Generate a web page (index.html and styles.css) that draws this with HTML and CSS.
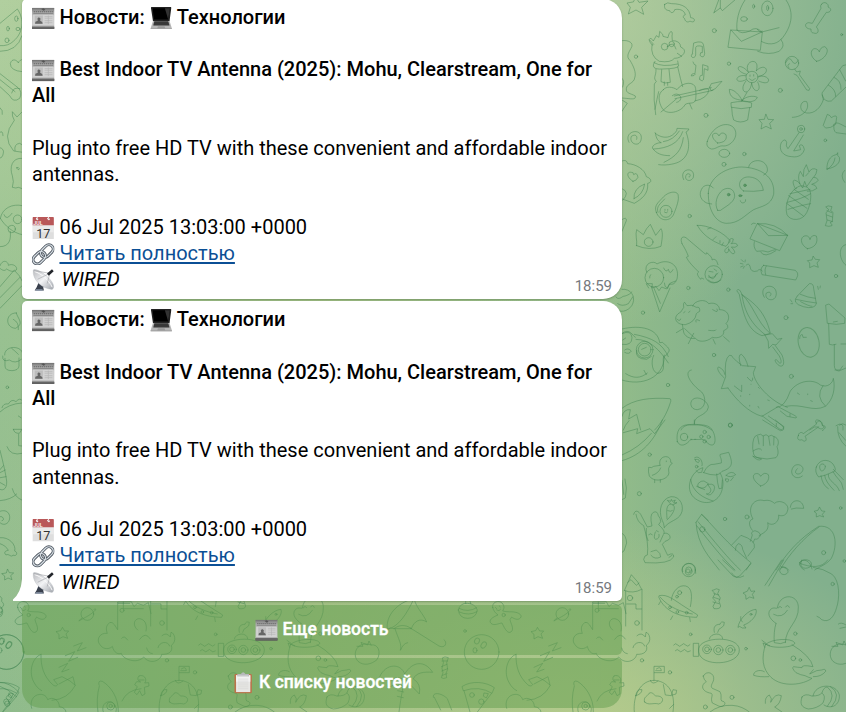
FILE: index.html
```html
<!DOCTYPE html>
<html lang="ru">
<head>
<meta charset="utf-8">
<title>Новости</title>
<link rel="stylesheet" href="styles.css">
</head>
<body>
<svg class="defs" width="0" height="0" aria-hidden="true">
  <defs>
    <linearGradient id="paper" x1="0" y1="0" x2="0" y2="1"><stop offset="0" stop-color="#777"/><stop offset=".2" stop-color="#aaa"/><stop offset=".85" stop-color="#c8c8c8"/><stop offset=".9" stop-color="#555"/></linearGradient>
    <linearGradient id="dish" x1="0" y1="0" x2="1" y2="1"><stop offset="0" stop-color="#b8b9bd"/><stop offset=".5" stop-color="#f2f3f5"/><stop offset="1" stop-color="#9fa3aa"/></linearGradient>
    <symbol id="news" viewBox="0 0 66 66">
      <path fill="url(#paper)" d="M0 3H66V65H0Z"/>
      <path fill="#d2d2d2" d="M2 23H64V56H2Z"/>
      <path stroke="#777" stroke-width="2" d="M1 4H65M4 19H62"/>
      <path stroke="#666" stroke-width="3" stroke-dasharray="4 2" d="M5 14H62"/>
      <path fill="#555" d="M27 6l7-2 5 4-5 3z"/>
      <path fill="#bdbdbd" d="M8 25H32V50H8Z"/>
      <path fill="#666" d="M9 49l1-6 7-3-1-6 4-4 5 4-1 6 6 4 1 5z"/>
      <path stroke="#b5b5b5" stroke-width="2" d="M37 28H60M37 33H60M37 40H60M37 46H60M48 25V50"/>
      <path stroke="#666" stroke-width="5" d="M0 61H66"/><path stroke="#999" stroke-width="2" d="M1 56H65"/>
    </symbol>
    <symbol id="laptop" viewBox="0 0 66 68">
      <path fill="#222" d="M3 0H62Q64 0 63 5L58 43H8L2 4Q2 0 3 0Z"/>
      <path fill="#000" d="M7 4H59L54 38H11Z"/>
      <path fill="#333" d="M44 4H59L54 38Z"/>
      <path fill="#b5b5b5" d="M8 42H58L65 64V68H1V64Z"/>
      <path fill="#333" d="M12 43H54L58 56H9Z"/>
      <path stroke="#555" d="M11 48H56M10 52H57"/>
      <path fill="#999" d="M23 58H43L45 64H21ZM1 65H65V68H1Z"/>
    </symbol>
    <symbol id="calendar" viewBox="0 0 66 68">
      <path fill="#dedede" d="M1 22H65V68H1Z"/><path fill="#eaeaea" d="M1 22H65V46H1Z"/>
      <path fill="#b95859" d="M3 0H63Q65 0 65 3V25H1V3Q1 0 3 0Z"/>
      <path stroke="#fff" stroke-width="3" fill="none" d="M16 1q-6 2-3 6M50 1q-6 2-3 6"/>
      <circle cx="15" cy="7" r="3" fill="#eee"/><circle cx="50" cy="7" r="3" fill="#eee"/>
      <text x="3" y="24" class="cal-month">JUL</text>
      <text x="33" y="62" class="cal-day">17</text>
    </symbol>
    <symbol id="link" viewBox="0 0 66 68">
      <g fill="none" transform="rotate(-45 33 34)">
        <g stroke="#4b545e" stroke-width="9"><rect x="-4" y="20" width="42" height="26" rx="13"/><rect x="26" y="22" width="43" height="26" rx="13"/></g>
        <g stroke="#d5dce2" stroke-width="4"><rect x="-4" y="20" width="42" height="26" rx="13"/><rect x="26" y="22" width="43" height="26" rx="13"/></g>
      </g>
    </symbol>
    <symbol id="antenna" viewBox="0 0 66 68">
      <path fill="#39404d" d="M19 41L37 48L33 56L35 65H7L13 55Z"/><path fill="#8c98ab" d="M10 61H31V66H10Z"/>
      <path fill="url(#dish)" stroke="#aaaeb4" d="M3 3C-1 30 26 59 60 62C68 56 65 42 48 26C32 10 10 -2 3 3Z"/>
      <path fill="none" stroke="#fafafa" stroke-width="3" d="M7 8C25 12 51 34 60 55"/>
      <path stroke="#a5a7ab" stroke-width="2" fill="none" d="M16 31L53 13L45 44M5 5L53 13"/>
      <path stroke="#23262b" stroke-width="8" d="M47 17L62 4"/>
    </symbol>
    <symbol id="clipboard" viewBox="0 0 66 68">
      <rect x="5" y="6" width="54" height="60" rx="4" fill="#b9744b"/>
      <path fill="#e8e8e6" d="M10 10H54V62H10Z"/><path fill="#f3f3f2" d="M10 10H54V30H10Z"/>
      <path stroke="#cbcbca" stroke-width="1.5" d="M16 22H48M16 28H48M16 34H48M16 40H48M16 46H48M16 52H48"/>
      <path fill="#b7b9ba" d="M14 6H25Q32-4 39 6H50V14H14Z"/><path fill="#ddd" d="M16 11H48V15H16Z"/>
    </symbol>

    <g id="bowl"><circle cx="155" cy="276" r="52"/><ellipse cx="141" cy="243" rx="7" ry="9" transform="rotate(30 141 243)"/><ellipse cx="161" cy="255" rx="7" ry="10" transform="rotate(35 161 255)"/><ellipse cx="135" cy="271" rx="6" ry="8"/></g>

    <g id="lower">
      <path d="M85 150q5-22 28-20t29 20q-4 25-29 25t-28-25zM87 145q27 14 53-2M88 156q28 13 53-1M107 130v-12l11-3 4 16"/>
      <path d="M188 142c-4-18 26-26 33-5 3 6-1 12-3 16 12 4 30 1 40 4s20 9 13 17-20 2-26-3l-5 8c2 12 14 27 3 37-10 5-17-6-27-27-8 0-24 10-33 1s5-19 21-25c-8-6-14-13-16-23zM196 142l4 4M208 138l3 3M200 150q8 6 12-2"/><circle cx="221" cy="165" r="5"/>
      <circle cx="397" cy="162" r="19"/><path d="M381 174c-22 18-3 5 14-4 20-11 37-28 22-22"/><circle cx="105" cy="213" r="4"/>
      <path d="M323 203l6 10 12 0-8 9 5 13-14-5-12 7 0-14-9-8 13-3z"/>
      <use href="#bowl"/>
      <path d="M356 258l26-10-15 25 26-10M331 287l28-12-18 29 27-12M312 322l26-12-18 26 22-8"/>
      <path d="M258 283c-27 9-39 55-20 86 6 11 13 18 22 23M258 283c-1 36 8 66 35 91 5 5 12 5 15 0l-12-15 25-9q27 12 40 26-22 42-70 45M312 372l42-22 6 25"/>
      <path d="M230 445c-6-18 2-40 25-42 14 0 20 7 23 16 14-10 35 0 35 21q18 2 20 16"/>
      <path d="M36 303h17M34 320l17-7M35 333l18-7M37 346l14-5M38 293q6-5 17 0l-5 15 3 20-5 12 2 13q-10 5-16 0l5-15-3-13 4-16z"/>
      <path d="M97 379c27-18 71-14 96 4l-7 17q-38-24-85-8zM102 392l18 64M184 401l-42 55"/><circle cx="126" cy="405" r="7"/><circle cx="154" cy="425" r="8"/><path d="M163 399l12 2-6 13-8-5zM10 412c-4-18 26-13 42 4l13 34M13 412l19 38"/>
      <path d="M432 375q-4-15 10-11c24 14 49 48 48 91M433 378c-7 24-8 55-4 78M445 456c-10-28 22-42 35-20q7 10 3 20M501 423q14-33 57-37"/><circle cx="467" cy="438" r="12"/><circle cx="467" cy="438" r="5"/>
      <path d="M552 348c13-7 27 9 17 21l12-1 1 10-14 4 2 20-9 5-7-15-8 12-8-7 9-17-8-6 6-9 12 1q-15-7-5-18M552 360h15"/>
      <path d="M488 208v-82l41-1 8 15 10-10 18 6 15-8 8 33M490 130h34M505 126v20h60M583 92l21-48q23 22 31 44-27 14-50 4zM587 93v105M636 88v122M590 132h28v15h17M593 67l10-8 16 17 8-7M548 210c-20-17-7-39 10-33 16 5 18 24 15 36M487 208q-17-34-29-14c-8 10-1 26-1 26-25-3-34 22-22 34 11 18 32 12 37 5 5 20 18 25 27 21 3 17 47 34 67 11 19 24 51 12 54-8 21 1 35-8 29-27 18-12 9-38-1-39l-2 14q-12-16-25-4M500 235q7-11 18 5M554 238q17-25 32-1M575 264q3 15 17 17M609 263c3-18 30-22 35-5"/><circle cx="501" cy="151" r="6"/><circle cx="600" cy="114" r="8"/><circle cx="621" cy="189" r="7"/>
      <path d="M688 107c23-7 47 15 77 34l38 24-3 7c-49-1-95-16-113-59zM724 121c2-27 23-48 43-43 20 5 20 32 14 62M691 112c26 31 63 44 96 50M691 125l-5 9M728 168l-6 11M779 173l2 12"/><circle cx="749" cy="98" r="6"/><circle cx="741" cy="110" r="4"/><circle cx="720" cy="142" r="4"/><circle cx="742" cy="156" r="4"/><circle cx="770" cy="158" r="4"/>
      <path d="M850 90q10-7 18-1l-5 12 8 13-4 10 5 14q-1 10-20 8l-3-7 8-15-9-10 7-13-8-9zM852 101l14 4M851 112l18 6M849 126l18 5M958 83l5 11 12-1-8 10 5 12-13-4-11 7-1-13-8-6 12-5z"/>
      <path d="M924 201c3-24 32-52 54-53 6 18-17 41-37 47l7 9-11 0-7-4zM937 186q-8-6-5-16"/><circle cx="963" cy="163" r="3"/><circle cx="782" cy="223" r="4"/>
      <path d="M806 265c5-36 120-39 122 4 2 48-116 54-122 8zM791 250h15v39h-15zM838 237c3-19 39-21 40-1M853 217c-4-18 4-24 17-24q2-10 13-6 1 12-10 17-7 0-10 13M731 255q6-8 12 0t12 0 12 0 13-1M736 272q6-7 11 0t11 0 10 0 13 1"/><circle cx="831" cy="268" r="13"/><circle cx="831" cy="268" r="7"/><circle cx="865" cy="270" r="14"/><circle cx="865" cy="270" r="7"/><circle cx="901" cy="270" r="14"/><circle cx="901" cy="270" r="7"/><circle cx="948" cy="266" r="4"/>
      <path d="M1038 190c-12-7-31-27-16-42 9-8 17-1 20-4 6-44 61-45 63-3 2 47-38 60-39 107M1031 163q25 14 41-12M1045 144q4-9 10-1M1067 141q6-10 11 1M1038 190c-5 16-7 39-5 58q20 7 34-2M1007 253c18-17 77-20 87-5 5 14-67 20-84 6M1007 253c-14 39-10 74 16 99 35 32 97 22 123 3l-10-3q-10-6-24-8l-14-6q-15-15-7-18 12 2 25 3-2-10 33-3-7-32-63-66M1003 335c-15-9-34 0-32 11 12 4 27 5 45 4M1150 329l-11 13 21-10 15-2q13-5 12 4-13 17-37 16M996 241l12 9M1004 262l-5-13 20 8"/><circle cx="1090" cy="295" r="7"/><circle cx="1111" cy="300" r="4"/><circle cx="1096" cy="221" r="5"/>
      <path d="M1248 255c-39-15-60 26-39 49 18 15 40 9 57-5 14-23 3-48-18-44l-6-12-4 12-20-8 6 12-18 0"/>
      <path d="M613 456c-5-48 18-95 60-95 33 2 66 26 56 95M672 362v-43h31v19h-30M679 327q14-10 15 5h-17M644 426c-6-16 10-17 13-26 10-7 17 8 21 8 26-1 24 20 8 24-16-5-30 6-42-6zM700 374l6 31 18 2 5-18 11 2-2 11-11 3M661 361q5 16 23 2M617 407q4-22 19-18-1 14-19 18zM719 445l12-12"/>
      <path d="M820 348c10-19 34-9 31 11-2 11-12 18-4 26l23 10c7 12 0 23 5 28 20 3 5 22-9 15l-19-9c-7-16 4-22-3-29-30-5-33-25-15-35-5-4-8-9-9-17zM840 456q28-22 66-20c23 1 39 10 52 20"/><circle cx="906" cy="412" r="6"/><circle cx="720" cy="337" r="5"/><circle cx="826" cy="441" r="6"/><circle cx="636" cy="301" r="5"/>
      <path d="M1006 430q-2-19 12-25 10 12 4 22 14-29 32-20-3 26-20 34l22 15M1116 411q9-12 29-3 25 0 30-9 14 7 4 30-18 17-44 18c-21-5-26-15-19-36zM1149 408c6-38 70-40 79-3 2 31-24 44-46 30M1176 398q5-17 16-17 29 24 0 58M1201 380q36 20 4 60"/>
      <path d="M1297 208c-6-40 28-80 80-92 8 30 28 45 38 70-19-13-38-3-46 20-18-14-38-11-52 0q-12-6-20 2zM1297 208c34-7 58-46 80-92M1317 206l52 0M1366 204l86 54c20 9 26-12 15-19M1320 206c10 32 22 47 16 64M1337 270q7-20 21-22"/>
      <path d="M1274 350c19-42 64-40 75-8 24-39 60-42 84-5-25-2-50 0-58 20q24 14 18 45-24-25-44-45c-8 40-13 67-17 99M1345 357c-26-11-47 4-48 28 18-12 35-11 48-28M1331 375l18 4M1328 392l18 4M1327 409l18 4"/>
    </g>
  </defs>
</svg>

<svg class="wallpaper" viewBox="0 0 846 712" aria-hidden="true">
  <g class="ink">
    <g transform="translate(-45 560) scale(.333333)"><use href="#lower"/></g>
    <g transform="translate(430 560) scale(.333333)"><use href="#lower"/></g>
    <g transform="scale(.333333)">
      <path d="M0 70L52 27c22 31 17 72-11 96Q25 139 0 137M0 154q52 0 66-47"/><ellipse cx="49" cy="56" rx="5" ry="8"/><ellipse cx="24" cy="86" rx="4" ry="7"/><ellipse cx="54" cy="87" rx="6" ry="5"/><ellipse cx="21" cy="121" rx="6" ry="7"/>
      <path d="M66 215Q31 212 31 191c4-18 21-11 24-2q4-11 13-10M0 221l54 42q14 13 5 32-19 15-30-8L0 260M0 239l45 36M35 279q5-20 25-13M0 323q10 8 7 20M0 397q8-8 9 10M0 443q13 4 10 16-2 15-10 15M66 336l-15 15-14-16q-2 13 6 26-40 50-2 92l28 4M45 452q-4-20 14-22l7 4M67 475c-32-3-39 28-30 52q6 18 0 35 12 4 18 0l12 4M50 503q5-4 8 3-3 8-8-3M1 655c5-31 37-45 66-38M1 655c13 22 38 44 66 49M0 740c29 0 33-22 31-45"/><circle cx="53" cy="658" r="13"/><circle cx="35" cy="687" r="11"/><path d="M12 644q7 20 24-4M0 797c9-23 26-11 25-1 13-7 29 4 24 14-10 9-23 1-29-3-7 8-14 3-20-2M45 813q16 14 22 31M0 860l43-50M0 893l60-61M0 925l66-68M49 939c-32-2-36 43-3 46 28-14 7-29 3-46zM40 958q18 9 15 31M14 1065c-1-31 54-29 54-3M35 1045q8 6 20 18"/>
    </g>
    <g transform="translate(0 356) scale(.333333)">
      <path d="M15 7v23q0 14 21 14 20-1 21-14V6M8 0q-2 20 20 12 18 13 36-2"/><circle cx="22" cy="94" r="4"/>
      <path d="M0 168q26-25 66-27M6 155q4-14 19-11 10-17 23-7 12-14 19-3M40 220h26l-8 12q-15 1-18-12M56 235v34l10 1M21 272q10 29 46 20M55 180l8 5M0 283q14 54 19 85c5 28-8 38-19 32M0 341l10-12M0 350l16-8M1 365l17-3M1 380l14 8M0 434q34-3 50-20M37 398q6 25 30 35M0 466c35-13 38 37 12 39-23-1-18-30-5-22q8 9-1 11M0 545c28-3 49 22 44 40 11 4 6 18-5 12-4 10-13-6-21 0-9-9 0-13 7-14Q18 569 0 563M23 640l5 10 13 1-9 8 4 12-12-5-10 6 0-12-9-7 13-2z"/>
      <path d="M0 720q9 6 5 16Q17 747 5 755q8 17-3 27"/><circle cx="19" cy="888" r="52"/><ellipse cx="4" cy="856" rx="7" ry="10"/><ellipse cx="27" cy="867" rx="7" ry="11" transform="rotate(35 27 867)"/>
      <path d="M0 979q28 0 57 30l-8 13Q23 998 0 991M50 1021L9 1068M28 1015q15 8-2 18-16-8 2-18"/><circle cx="22" cy="1043" r="8"/>
    </g>
    <g transform="translate(616 0) scale(.333333)">
      <path d="M60-8l9 15 27-4-19 19 6 21-23-13-23 12 6-20-10-13 18-3z"/>
      <path d="M146 13q8-8 21-2c36 0 54 14 57 42 8 1 15 5 9 12-6 2-9-2-12-1-8 5-14-1-15-8-8-4-3-11 2-12-4-15-20-18-32-15-2 10-12 12-15 3-15-1-17-10-15-19zM294 38l14-38M294 38l19-14 6 8L359-2M313 24V0"/>
      <path d="M363 90c-3-24 4-61 24-90M363 90q12 15 38 3 20-16 36 3l52-13M510 0c28 40 15 84-15 119q15 20-6 35-30 13-64 0M436 124c17 10 43 13 60-7M424 88q8 12 14 5"/><ellipse cx="454" cy="25" rx="17" ry="22"/><ellipse cx="455" cy="24" rx="3" ry="8"/><ellipse cx="413" cy="19" rx="3" ry="6"/><ellipse cx="384" cy="57" rx="10" ry="7"/>
      <path d="M345 90l94 6-6 55-96-9zM345 90l31 34 62-28"/>
      <path d="M617 12c9-11 23 1 19 9 14 5 8 18-5 16l-30 44c11 12 4 23-8 18-9 0-8-9-8-12-17 1-23-17-7-19l11 2 26-45q-4-8 2-13zM602 184c-27-17-16-44 0-37q7 3 8 9 3-15 16-16c20 10-2 41-24 44z"/><circle cx="295" cy="92" r="6"/><circle cx="60" cy="170" r="5"/><circle cx="339" cy="191" r="5"/><circle cx="493" cy="271" r="6"/><circle cx="270" cy="346" r="6"/><circle cx="677" cy="104" r="3"/><circle cx="628" cy="421" r="4"/>
      <path d="M109 135c-18-16-6-28 3-12l9-16 8 5 2-18q13 10 10 15l15 4c4-23 16-24 12-5l1 14q24 0 25 19 16 7 10 19-10 15-29 15-10 14-45 9-28-15-22-50zM101 120l12 13M153 140q20-19 27 7M184 160l13 9M117 184c-11 16-5 25 23 23q45-1 48-9l-3-15M114 188q25 15 71 4M120 208c1 20-10 25 1 36l-6 8q-3 50 4 92M185 200q9 40 15 60M137 209l-2 36q10 7 28 2l-4-39M145 246v10M155 248v8"/><circle cx="146" cy="140" r="10"/><circle cx="167" cy="132" r="8"/>
      <path d="M142 269c8-11 28-9 41 0 16-24 54-26 56-3q2 20 0 34c-7 15-20 5-32 14-10 22-57 34-69 10-10-17-15-43 4-55zM128 275q-5 20-11 53M169 287q12-10 23 0c7 10-2 19-10 20M135 336l46-39M175 288l111-25M177 296l114-25M281 262l5-11 32-7-20 22-13 6-4-11M250 272q20-10 29-3-4 26-42 34M221 311q4 10 7 16"/>
      <path d="M229 162l4-33q30-10 30 9l3 22q-2 18-14 6 1-12 7-8v-19q-19-4-20 4v22c-2 14-21 6-10-3M231 186q3 10 9 10l-3 25q-12-1-11 7 10 0 12-5M251 238q-2-13 8-12l1-32 16 5v12l-11-5-2 28q-1 15-12 4"/>
      <ellipse cx="408" cy="231" rx="18" ry="17"/><path d="M400 236q8 12 18-1M402 225v4M413 224v4"/>
      <path d="M397 216c-18-34 38-49 24-4M421 212c28-28 48 8 8 17M429 229c38-7 40 34-1 14M425 246c16 30-14 38-18 3M407 249c-6 46-44 26-17-6M390 239c-35 18-38-17-1-12M391 223c-42-12-24-42 6-7"/>
      <path d="M393 277l-15 26M378 301c-8-17-23-32-38-33 0 26 18 30 38 33zM378 301c13-13 34-15 46-9-6 16-30 15-46 9zM346 308q40-8 61 1l-1 13q-31 8-59 0zM347 322q1 27 6 38 20 12 42 0l6-37"/>
      <circle cx="528" cy="189" r="20"/><path d="M509 188q10-22 19-5t19-3M519 204q-8-10 2-13M536 207l6 9 11-3-3 11 31 42q1 8-9 4l-29-44-9-4M622 299l-4-20 62-82 12-3M618 285q7 23 28 18l44-42M637 255q23 13 22 34M654 232q22 9 21 36M671 209l18 34M622 299c-7 23-26 43-50 40-28-4-19-41 0-34 12 24-15 47-43 47M450 343l6 15 17 1-12 11 5 17-16-8-15 8 3-17-9-11 15-1zM622 375l12-32q10 3 12 10 15-10 16-1l-3 21-15 9-14 2zM654 373q4-9 21 0l15 8M654 373q-3 18 6 25l30 4"/>
      <path d="M39 427c-18-34 37-45 37-14-1 32-39 20-30-4 14-9 19 1 16 9M117 399c12 12 44 24 65-7l1-7 36 2q-4 8-9 9c13 34 12 70-18 88-9 6-38 14-64 10M118 399c2 16 9 26 18 29-10 0-26 5-27 16 12 17 28 23 52 23M142 425q30-4 48-32M113 447c41-2 75-16 87-52M144 487c36-18 53-35 58-74"/>
      <path d="M274 424c12-40 51-62 76-44 23 22 0 57-26 58-16-3-23 10-38 9-12-4-16-12-12-23zM305 429c-20-14-20-31-4-29q5 1 8 8 7-16 21-4c4 15-5 24-25 25z"/><ellipse cx="325" cy="460" rx="16" ry="12"/><circle cx="324" cy="493" r="6"/><circle cx="385" cy="462" r="5"/>
      <circle cx="555" cy="387" r="11"/><circle cx="555" cy="387" r="4"/><path d="M549 398l-33 48q-8-7-4-19-4-14-16 0c-10 24 6 42 31 43 23 4 35-9 38-22q-5-20-15-11l4 12-21 4 29-48M18 122c18-3 38 6 27 23-8 14-15 26-3 36 10 17 20 37 14 53-2 16-24 17-25 32s11 13 27 22c2 13-12 8-40 6M18 235q9 5 2 26M18 300l16 10-10 14-6 10"/>
    </g>
    <g transform="translate(616 140) scale(.333333)">
      <path d="M18 63q14-6 17 8c24 1 52 17 56 39 15 5 19 17 4 20 3 32-18 47-40 60l-36-13M51 124c-20-12-20-30-5-27q7-1 7 7 10-9 13 8-5 11-15 12zM54 176q-3-30 32-44-5 32-32 44M18 146q26 10 2 35M203 119c-17-35 37-41 29-7-9 19-33 6-19-10 13-4 11 11 6 9"/>
      <path d="M121 217c-9-21 7-30 22-47 14-15 45-21 44 0 2 15-11 45-15 55-10 19-40 22-51-8zM126 217c-7-18 8-26 20-40"/><circle cx="150" cy="214" r="18"/><path d="M145 216q6 6 10 0M147 208v3M155 208v3"/>
      <path d="M287 192c-25 0-42-22-31-43 7-17 27-17 36-5M398 82c2-25 49-30 56 3 2 11-5 17-11 20M277 160c0-46 52-79 100-79 56 2 101 28 96 82-8 34-36 35-60 46-25 15-44 42-82 41-33-2-55-42-54-90zM305 211c-11-19-3-47 15-61 18-11 36-3 36 19-2 20-32 33-42 42q-6 1-9 0zM383 153c-23-12-13-45 18-42 23 2 37 16 41 40q-28 5-59 2zM373 182q2 9 11 6 7-3 5-9"/><g class="solid"><circle cx="338" cy="164" r="4"/><circle cx="387" cy="136" r="4"/><ellipse cx="373" cy="167" rx="5" ry="3"/></g>
      <path d="M541 144c-19 10-37 50-28 80 10 21 47 19 59-6 12-24 22-73-4-78q-16-7-27 4zM534 148l43 30M518 167l55 38M512 190l50 38M516 208q47-14 68-17M514 187q45-11 70-26M522 161l60-13M538 146q-12-22-3-26 12 3 17 12-9-22 1-38l9 16q-1-24 9-36l8 22q9-15 24-7-1 13-10 23 10-1 14 9-6 8-20 12 12 0 16 12-12 10-29 9M552 132l8 12 6-20 6 16 20-28M569 108l9-10"/>
      <path d="M633 87c-2-22 11-39 24-42q7 0 8-7-2 10 5 14c4 16-9 30-37 35zM657 54q-2 20-23 34M686 91q-16 15 0 36M630 200q5-5 18 0l-4 12 7 5-2 27-7 4q8 5 6 9-9 4-20 0l5-15-3-24 8-8zM633 212l14 6M632 225l17 6M634 240l16 5M18 239q14-10 13 3L18 274"/>
      <path d="M62 317c2-18-5-31 0-48l20 15q9-20 21-31l16 33 16-20c8 13 2 37 0 53q-35 14-73-2z"/><circle cx="98" cy="306" r="13"/>
      <path d="M244 256c31-2 81 22 99 47l-13 16c-28-9-67-27-86-63zM275 267l10-4M291 299l9-9M312 302v6M318 316l4-8M338 308q2-17 14-11-1 11-7 14 18-4 20 6-7 8-19 4 15 15 8 20-9 2-16-15 0 15-9 12-9-8 9-18"/>
      <path d="M425 251l90 35-24 46-88-35zM425 251l32 36 58-1M425 251q53-5 90 35M415 305q-4 17 7 29 20-4 34 2 15-6 22-7M434 336q10 20 46-4M406 253q5-6 12-3"/>
      <path d="M198 311c-6-15-1-24 12-18l53 45q10 9 9 0 18 14 16 22 12-9 18 14M198 311c8 13 15 26 19 38l-6 3c7 14 20 27 37 44-8 5-1 14 6 22q0-7 9-1"/><circle cx="293" cy="403" r="26"/><path d="M279 394l12 2M294 387l8 6M278 406q14 24 23-5M277 411q17 7 29-12"/>
      <path d="M574 326c-29-17-18-43 0-38q8 4 8 11 5-17 19-11c7 21-6 36-27 38zM592 349l6 9 13 1-8 10 4 13-13-5-13 6 0-14-7-7 13-2zM443 376l95 15q10 8 7 16t-6 13l-101-16q-8-20 5-28zM451 378q-7 10-2 26M439 393q-8-9-15 0-20 6-22-14-4-12-12-3M373 370l8 2M376 359l6 6M388 360l-1 6M374 381l7-3M382 385l3-6"/>
      <circle cx="221" cy="228" r="5"/><circle cx="660" cy="408" r="5"/><circle cx="115" cy="413" r="28"/><path d="M92 397c-12-28 22-37 31-25 31-18 70 0 60 45-8 21-17 14-24 16l-4 12q-10-3-10-16M143 384q7 16 14 4 4 19 14 1M91 432l7 12M104 404q-4 4-3 10M690 314c-22 2-24 43 0 62"/>
    </g>
    <g transform="translate(616 280) scale(.333333)">
      <path d="M93 11l16 0-1 13 12-4 9 12 8-11 15 6 11-18 16-6M106 20l25 76 31-72M114 25l19 45M0 51c4 8 14 4 21-2 7 0 24-7 26-13M5 71q13 10 32 0l13-20M18 28c26-3 40 20 33 41-6 20-34 33-48 20M276 0q20 16 39 0"/>
      <path d="M203 81q-2-14 3-14l7 10q16-5 28 5 12-3 10 12-8 4-10 7-3 25-33 33c-30 1-40-25-15-37zM183 117q8 10 11 0M203 98l4-3M218 97l4-3M230 78c5-17 39-23 48-7 20-6 34 7 32 18 32 0 33 30 20 41q14 14-7 22c3 19-20 24-34 20-18 16-45 14-50 3-22 3-33-9-36-18l-4-24M181 158l20-12M217 191l16-31M291 177l7 15M323 170l17 15M206 146l29 27M240 126q-4-12 11-4M290 89q20 13 13-2M278 151q21 3 22-1"/>
      <path d="M363 31c6-8 11 3 15 13 35 24 70 50 85 116l-25 7c-45-16-56-65-68-123zM378 44c5 39 20 82 68 119M378 44c34 30 44 81 82 114M447 165l22-4 15 17 14-3-18 20-10-2-12 12q3-23-11-40M478 197l20 28c14 38-5 40-17 24-9-12 1-14 7-2 9 8 10-4 2-19l-20-27M445 52c-22-37 36-47 36-11-1 29-39 20-30-2 15-8 17 7 11 9M544 48l36-37q13-2 13 15l8 45q-5 18-39 9-38-11-18-32M540 58q30 7 61 11M553 43q23 10 45 12M554 65q25 14 34 14M605 19l2 9M613 18l-1 6M523 59l5 7M525 71h5"/>
      <circle cx="217" cy="24" r="5"/><circle cx="337" cy="29" r="5"/><circle cx="81" cy="98" r="5"/><circle cx="510" cy="113" r="6"/><circle cx="294" cy="225" r="5"/><circle cx="526" cy="289" r="6"/><circle cx="156" cy="315" r="5"/><circle cx="343" cy="436" r="6"/>
      <ellipse cx="578" cy="187" rx="31" ry="45" transform="rotate(-12 578 187)"/><path d="M551 176q0-13 8-12l2 8 10 0M630 75l9-3 48 42-1 16-25 3-26-3zM638 131l2 62q9 4 20 0M652 126l12-2M655 194v62q0 16 14 17l21-9M675 192h15M657 270l15 0 8-12"/>
      <path d="M18 147c58-14 108 0 113 41l8-1c7 7 28 20 18 30q-3 9-12 12c-2 66-68 90-127 71M18 160c24-18 32 9 40 12M55 163c55 11 83 26 102 67M60 178c42 0 72 33 97 71M113 226c-10 20-4 55 15 54 27-7 6-40 17-55M26 210q9-8 20 3-7 12-20 4M29 281c24 15 44 15 65-2M84 271l7 13"/><circle cx="86" cy="209" r="25"/><circle cx="86" cy="209" r="19"/><path d="M62 211q-7 26 30 27l14-9M18 161q28-12 30 12 0 25-30 20M77 208l14-6M20 180l9-6"/>
      <path d="M336 324l-20 2 13-36q-5-52 11-64 8-2 11 7 8 10 28 24l40 3-7 18c2 31 50 86 102 104M336 324c24 35 62 74 102 85l48-29M324 293c-21-18-22-33-15-32 11 8 16 10 17 22M374 257q-10-34 2-34 13 9 20 36M394 292q18 22 16 2M355 318l22 17V316M405 313v0M438 407l54 41q10 3 12-8l-47-32M488 381l49 26q8 4 3 7l-27-5-20-16M481 382q25 1 42-49c25-34 70-36 90-18 22 10 38-7 39-20 7 31-1 65-24 84-38 19-70-10-119 0M621 317q-24 33 7 61M374 347v2M401 343v1M427 322l3 3M401 376v2M455 360l5 2M544 339l6 4M575 342v2M584 362l5 2M426 379l3 5M522 402v7M481 430v9"/>
      <path d="M226 270c-26 6 0 44 31 66 14 16 14 50-13 53-26 0-26-36 0-35 21 1 34 20 33 28-6 28-44 22-42 49M195 450c9-24 65-22 92 0M18 409q5-22 25-20l-5 28 24-14 12 47M18 385c35-28 86-33 144-29 3 0 3 8 1 12-11 35-28 62-47 82M601 429c11-16 20 1 18 8 16 0 7 11 0 15M660 437q25-15 21 13M581 450l14-9 13 0"/>
    </g>
    <g transform="translate(616 420) scale(.333333)">
      <path d="M22 30q4-14 17-28M22 38l43-12-3 15 40-15 14 15 31-41M18 122C76 106 117 61 139 0M18 105q52-22 88-65M184 65c-5-32 8-49 31-51 27 3 40-3 59 4 22 5 31 55 15 57-12 2-21-17-32-17-15 1-22 0-33 1-12 14-30 26-40 6z"/><circle cx="204" cy="51" r="11"/><circle cx="266" cy="36" r="5"/><circle cx="256" cy="50" r="5"/><circle cx="278" cy="51" r="5"/><circle cx="266" cy="64" r="5"/><path d="M224 58h3M236 58h3M235 13V0M440 0l53 32q16 0 7-14l-22-18M410 84q-1-37 15-39 10-6 16 3 10-8 17 1 8-7 16 1c16 4 15 22 9 30q8 22-3 33-27 8-54 0-14-3-14-16zM425 49l4 23M442 49l0 28M458 50l4 26M474 50l-1 25M411 93q20-13 26-3M411 109l26 8q-10 9-26-8"/>
      <path d="M547 47c0-11 12-12 15-6l40-29q-8-14 4-12c10 2 11 12 12 14 14 10-3 18-12 8l-39 27c9 12-1 20-9 10-10 4-17-3-11-12zM670 15q10-8 20 0M665 20q-2 36 25 59M669 38l20 23"/>
      <circle cx="101" cy="104" r="5"/><circle cx="343" cy="15" r="6"/><circle cx="70" cy="221" r="6"/><circle cx="242" cy="140" r="4"/><circle cx="327" cy="297" r="5"/><circle cx="393" cy="291" r="6"/><circle cx="674" cy="264" r="4"/><circle cx="623" cy="398" r="6"/><circle cx="685" cy="423" r="4"/>
      <path d="M132 136c-9-31 35-35 32-9l5 3-7 6q-6 10-4 17c7 24-42 39-58 15q-4-12-2-26 10 3 15-3l19-3M134 144q-6 16-25 22M116 180v8M133 179v8M151 123v2"/>
      <path d="M240 152q7 10 17 5l4-14c-36 10-55 62-28 89 31 28 77 18 86-26 5-20 0-37-7-47M263 158q13-28 31-25l22-4c2-15-7-21-3-26l25-6c12 30 15 46-20 57q-11 20-55 4zM224 178c4 39 40 56 67 65M302 162q2 29 7 44l8-1 2-25M236 113c15-9 26 14 22 24M237 118q20-1 10 10-10-2-10-10M330 166q17-17 29-2-15 11-29 2M329 177q15-3 6 9-9-1-6-9M352 172l-8 10M247 190q8-9 17-7l13 8-7 9q-12 9-24 0zM242 199l24 10M272 222c10 0 15-9 11-17l-8-12q27-4 19 18-10 21-22 11"/>
      <path d="M434 198c-30-20-26-40-8-37q8 4 8 8 11-15 23-5c6 17-10 31-23 34zM559 168c-15 12-33 2-32-15 5-32 43-18 32 1-9 15-31 7-15-8M601 141c7-22 34-27 50-9q13 20 2 23l-24 10-21 6q-13-15-7-30zM628 139c-3-13-22-8-16 8 2 11 16 5 16-8M615 167q4 29 22 39M626 166q1 18 28 45M637 163c-2 22 25 25 33 49M651 155q9 15 17 23 10 7 14 30M652 148l30 31M611 262l6 11 10 1-8 9 4 8-12-4-10 4 0-11-7-6 11-3zM523 262c3-28 38-26 40 3q-25-3-37 2M27 177q8 26 1 57l-10 5M18 181l5 42"/>
      <path d="M145 322q-2-15-6-20c-14-32-2-66 26-72 30-2 41 32 30 52-9 19-35 20-50 40zM153 296c-2-28-2-41 12-44 15 3 15 22-12 48M155 272q10 4 14 0M164 252l-10-11 10 3 2-6 3 6 9-4-5 9 10-1-13 7"/>
      <path d="M53 283c5-18 16-7 21 0l20 38 14-3q-8-34 4-41 12-6 15 10 7 8 7 18l-6 9q22 20 15 27 7-4 14 1 11 10 0 18-11 2-18 13l16 33q19-11 18 5-12 22-86 17-8-10 0-20l7-3q5-35-11-88-20-11-23-34M91 325q-3 22 5 37M98 344q6-6 11 0M121 332l6 3M118 336q-7 19 1 22 13-2 10-15M105 395q9-3 16-5 14 10 13 21-18 9-29-5M142 344l-10 22M168 406l-9 6"/>
      <path d="M240 307l17-24 20 19M240 307c4 70 41 105 70 143M257 283c38 38 74 86 148 145l-14 22M246 305c48 58 94 115 127 145M242 317c42 52 77 98 115 133"/><circle cx="259" cy="328" r="8"/><path d="M358 391q0-15 9-20 12 2 13 17l12 27M347 375l28-29q46 15 40 37l-19 25M403 364l6-19q-7-9 8-13 14 3 17 13-8 16-18 12l-4 10M409 331c-14-18-9-32 2-34-20-35 4-64 33-55 17-4 27 4 31 8 18-15 49 4 39 24-4 15-20 15-26 11 3 22-20 36-33 23 7 26-17 32-26 39"/>
      <path d="M480 450c30-47 65-91 128-131 55-6 58 58 38 96-14 19-34 24-50 35M492 450c26-46 70-96 117-129M551 434c2-23 32-16 37 13M551 435q5 12 14 15M488 449q16-18 30 1"/><circle cx="218" cy="450" r="20"/><circle cx="218" cy="450" r="9"/><path d="M18 340q12 5 14 29l-8 24-6 4"/>
    </g>
    <g transform="translate(430 560) scale(.333333)"><circle cx="1208" cy="72" r="5"/><path d="M758 35c-9-26 35-35 38-9l1 14M787 33c-3 18-25 14-20-1 8-12 19 2 10 5M864 0l45 48q10 8 20 0l34-37M878 0l35 32M905 39q13 22 36 9M1005 76l50-76M1016 78l45-78M1053 20q21 4 21 14c0 12-24 15-25-2M1115 0c-12 29 18 29 28 18 8-16-20-28-36-9 35 14 68 17 86-9M1150 22q30 4 55 20c27 20 23 78 15 100-7 27-22 48-45 37q-4-6-14-10M1225 192q8-7 23 3M1230 205l18-4"/></g>
  </g>
</svg>

<main class="chat">
  <article class="bubble bubble-first">
    <p class="text"><b><svg class="emoji"><use href="#news"/></svg> Новости: <svg class="emoji"><use href="#laptop"/></svg> Технологии</b><br><br><b><svg class="emoji"><use href="#news"/></svg> Best Indoor TV Antenna (2025): Mohu, Clearstream, One for All</b><br><br>Plug into free HD TV with these convenient and affordable indoor antennas.<br><br><svg class="emoji"><use href="#calendar"/></svg> 06 Jul 2025 13:03:00 +0000<br><svg class="emoji"><use href="#link"/></svg> <a href="#">Читать полностью</a><br><svg class="emoji"><use href="#antenna"/></svg> <i>WIRED</i></p>
    <time class="time">18:59</time>
  </article>
  <article class="bubble bubble-last">
    <p class="text"><b><svg class="emoji"><use href="#news"/></svg> Новости: <svg class="emoji"><use href="#laptop"/></svg> Технологии</b><br><br><b><svg class="emoji"><use href="#news"/></svg> Best Indoor TV Antenna (2025): Mohu, Clearstream, One for All</b><br><br>Plug into free HD TV with these convenient and affordable indoor antennas.<br><br><svg class="emoji"><use href="#calendar"/></svg> 06 Jul 2025 13:03:00 +0000<br><svg class="emoji"><use href="#link"/></svg> <a href="#">Читать полностью</a><br><svg class="emoji"><use href="#antenna"/></svg> <i>WIRED</i></p>
    <time class="time">18:59</time>
    <svg class="tail" viewBox="0 0 10 22"><path fill="#fff" d="M10 0V22H0Q-1 21 0 20.400Q8 14 9 0Z"/></svg>
  </article>
  <div class="keyboard">
    <button class="key"><svg class="emoji"><use href="#news"/></svg>Еще новость</button>
    <button class="key"><svg class="emoji"><use href="#clipboard"/></svg>К списку новостей</button>
  </div>
</main>
</body>
</html>
```

FILE: styles.css
```css
* { box-sizing: border-box; }

body {
  margin: 0;
  width: 846px;
  height: 712px;
  overflow: hidden;
  position: relative;
  font-family: Roboto, "Liberation Sans", sans-serif;
  background:
    radial-gradient(ellipse 330px 210px at 590px 730px, rgba(186, 205, 140, .9), rgba(186, 205, 140, 0)),
    radial-gradient(ellipse 270px 330px at 600px 0, rgba(180, 205, 160, .9), rgba(180, 205, 160, 0)),
    linear-gradient(90deg, rgba(149, 190, 137, 0) 600px, rgba(149, 190, 137, .9) 601px, rgba(130, 177, 139, 0) 740px),
    linear-gradient(90deg, rgba(166, 193, 130, 0) 0, rgba(166, 193, 130, .8) 320px, rgba(166, 193, 130, 0) 640px),
    linear-gradient(90deg, rgba(128, 176, 140, 0) 600px, #82b08d 601px),
    linear-gradient(180deg, #b1cf9f 0, #a4c897 180px, #98c191 330px, #95be8f 560px, #8fbb8c 712px);
}

.defs { position: absolute; }

.wallpaper {
  position: absolute;
  inset: 0;
  width: 846px;
  height: 712px;
}

.ink {
  fill: none;
  stroke: #3f8350;
  stroke-opacity: .48;
  stroke-width: 2.9;
  stroke-linecap: round;
  stroke-linejoin: round;
}

.ink .solid { fill: #5e9866; }

.chat {
  position: relative;
  width: 600px;
  margin: -1.5px 0 0 22px;
  display: flex;
  flex-direction: column;
}

.bubble {
  position: relative;
  height: 300px;
  padding: 5.200px 10px;
  background: #fff;
  color: #000;
  box-shadow: 0 1px 2px rgba(70, 100, 60, .45);
}

.bubble-first {
  border-radius: 5px 19px 19px 5px;
  margin-bottom: 2.500px;
}

.bubble-last { border-radius: 5px 19px 5px 0; }

.text {
  margin: 0;
  font-size: 20px;
  line-height: 26.25px;
}

.text b { font-weight: 500; }

.text i { margin-left: 2px; }

.text a {
  color: #0b4f95;
  text-decoration-thickness: 1.5px;
  text-underline-offset: 2px;
}

.emoji {
  width: 22.5px;
  height: 22.5px;
  vertical-align: -5.5px;
}

.cal-month { font: 500 16px Roboto, sans-serif; fill: #fff; }
.cal-day { font: 400 38px Roboto, sans-serif; fill: #333; text-anchor: middle; }

.time {
  position: absolute;
  right: 10px;
  bottom: 4px;
  font-size: 15px;
  line-height: 18px;
  color: #75797e;
}

.tail {
  position: absolute;
  left: -9px;
  bottom: 0;
  width: 10px;
  height: 22px;
}

.keyboard {
  display: flex;
  flex-direction: column;
  gap: 3px;
  margin-top: 4px;
}

.key {
  height: 50px;
  border: 0;
  border-radius: 5px;
  padding: 0 0 2px;
  display: flex;
  align-items: center;
  justify-content: center;
  gap: 4px;
  background: rgba(98, 158, 78, .5);
  color: #fff;
  font: 500 17.500px/24px Roboto, "Liberation Sans", sans-serif;
  -webkit-text-stroke: .35px #fff;
}

.key:last-child { border-radius: 5px 5px 19px 19px; }

.key .emoji {
  width: 23px;
  height: 22px;
  position: relative;
  top: 1px;
}
```
